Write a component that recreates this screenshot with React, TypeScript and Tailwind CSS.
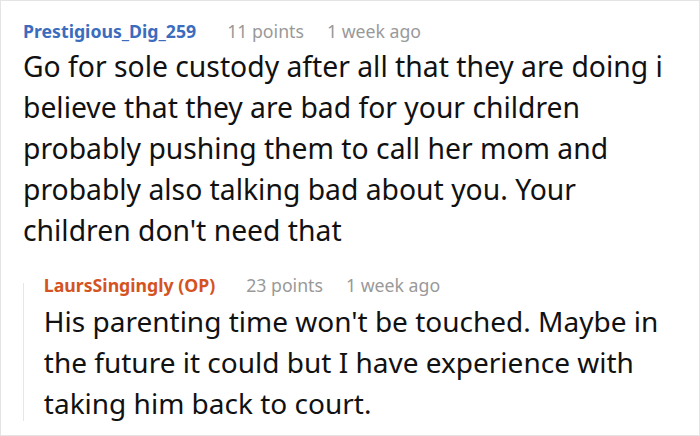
const Meta = (props: { name: string; nameColor: string; points: string; ago: string }) => {
  const { name, nameColor, points, ago } = props;
  return (
    <div className="flex items-baseline text-[17.7px] leading-[24px]">
      <span className={`font-bold ${nameColor}`}>{name}</span>
      <span className="ml-[31px] text-[#999999]">{points}</span>
      <span className="ml-[23px] text-[#999999]">{ago}</span>
    </div>
  );
};

export default function App() {
  return (
    <div
      className="w-[700px] h-[436px] bg-white border border-[#e4e4e4] pl-[22px] pr-[14px] pt-[18px] overflow-hidden"
      style={{ fontFamily: '"Noto Sans", "Open Sans", sans-serif' }}
    >
      {/* Parent comment */}
      <Meta name="Prestigious_Dig_259" nameColor="text-[#3b6cbd]" points="11 points" ago="1 week ago" />
      <p className="mt-[3px] text-[28.3px] leading-[41px] text-[#111111]">
        Go for sole custody after all that they are doing i believe that they are bad for your children probably
        pushing them to call her mom and probably also talking bad about you. Your children don't need that
      </p>

      {/* Reply */}
      <div className="mt-[22px] flex">
        <div className="w-[2px] bg-[#e6e6e6] mt-[10px] mb-[3px]" />
        <div className="pl-[20px]">
          <Meta name="LaursSingingly (OP)" nameColor="text-[#d4531f]" points="23 points" ago="1 week ago" />
          <p className="mt-[4px] text-[28px] leading-[41px] text-[#111111]">
            His parenting time won't be touched. Maybe in the future it could but I have experience with taking him
            back to court.
          </p>
        </div>
      </div>
    </div>
  );
}
